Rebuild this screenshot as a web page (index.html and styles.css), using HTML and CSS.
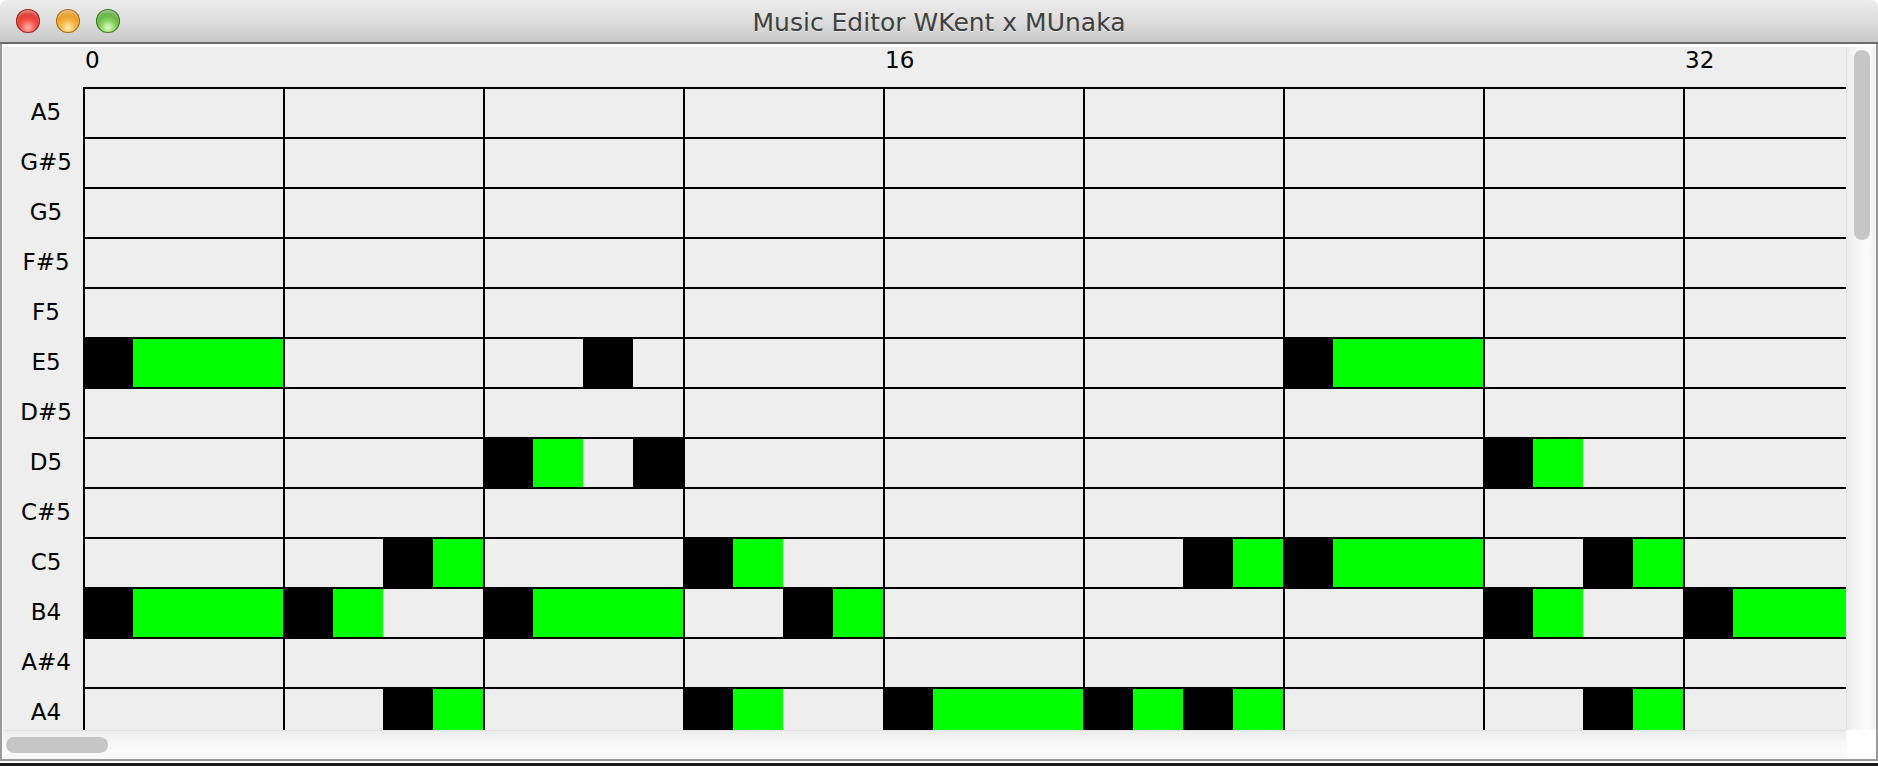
FILE: index.html
```html
<!DOCTYPE html>
<html>
<head>
<meta charset="utf-8">
<title>Music Editor WKent x MUnaka</title>
<link rel="stylesheet" href="styles.css">
</head>
<body>
<div class="window">
  <div class="titlebar">
    <div class="lights">
      <span class="light red"></span>
      <span class="light yellow"></span>
      <span class="light green"></span>
    </div>
    <div class="title">Music Editor WKent x MUnaka</div>
  </div>
  <div class="frame">
    <div class="main">
      <div class="viewport">
        <div class="content">
          <div class="ruler">
            <span class="beatnum">0</span>
            <span class="beatnum">16</span>
            <span class="beatnum">32</span>
          </div>
          <div class="score">
            <div class="labels">
              <div class="label">A5</div>
              <div class="label">G#5</div>
              <div class="label">G5</div>
              <div class="label">F#5</div>
              <div class="label">F5</div>
              <div class="label">E5</div>
              <div class="label">D#5</div>
              <div class="label">D5</div>
              <div class="label">C#5</div>
              <div class="label">C5</div>
              <div class="label">B4</div>
              <div class="label">A#4</div>
              <div class="label">A4</div>
            </div>
            <div class="grid">
              <!-- E5 -->
              <div class="note head" style="grid-row:6;grid-column:1"></div>
              <div class="note sustain" style="grid-row:6;grid-column:2 / span 3"></div>
              <div class="note head" style="grid-row:6;grid-column:11"></div>
              <div class="note head" style="grid-row:6;grid-column:25"></div>
              <div class="note sustain" style="grid-row:6;grid-column:26 / span 3"></div>
              <!-- D5 -->
              <div class="note head" style="grid-row:8;grid-column:9"></div>
              <div class="note sustain" style="grid-row:8;grid-column:10"></div>
              <div class="note head" style="grid-row:8;grid-column:12"></div>
              <div class="note head" style="grid-row:8;grid-column:29"></div>
              <div class="note sustain" style="grid-row:8;grid-column:30"></div>
              <!-- C5 -->
              <div class="note head" style="grid-row:10;grid-column:7"></div>
              <div class="note sustain" style="grid-row:10;grid-column:8"></div>
              <div class="note head" style="grid-row:10;grid-column:13"></div>
              <div class="note sustain" style="grid-row:10;grid-column:14"></div>
              <div class="note head" style="grid-row:10;grid-column:23"></div>
              <div class="note sustain" style="grid-row:10;grid-column:24"></div>
              <div class="note head" style="grid-row:10;grid-column:25"></div>
              <div class="note sustain" style="grid-row:10;grid-column:26 / span 3"></div>
              <div class="note head" style="grid-row:10;grid-column:31"></div>
              <div class="note sustain" style="grid-row:10;grid-column:32"></div>
              <!-- B4 -->
              <div class="note head" style="grid-row:11;grid-column:1"></div>
              <div class="note sustain" style="grid-row:11;grid-column:2 / span 3"></div>
              <div class="note head" style="grid-row:11;grid-column:5"></div>
              <div class="note sustain" style="grid-row:11;grid-column:6"></div>
              <div class="note head" style="grid-row:11;grid-column:9"></div>
              <div class="note sustain" style="grid-row:11;grid-column:10 / span 3"></div>
              <div class="note head" style="grid-row:11;grid-column:15"></div>
              <div class="note sustain" style="grid-row:11;grid-column:16"></div>
              <div class="note head" style="grid-row:11;grid-column:29"></div>
              <div class="note sustain" style="grid-row:11;grid-column:30"></div>
              <div class="note head" style="grid-row:11;grid-column:33"></div>
              <div class="note sustain" style="grid-row:11;grid-column:34 / span 3"></div>
              <!-- A4 -->
              <div class="note head" style="grid-row:13;grid-column:7"></div>
              <div class="note sustain" style="grid-row:13;grid-column:8"></div>
              <div class="note head" style="grid-row:13;grid-column:13"></div>
              <div class="note sustain" style="grid-row:13;grid-column:14"></div>
              <div class="note head" style="grid-row:13;grid-column:17"></div>
              <div class="note sustain" style="grid-row:13;grid-column:18 / span 3"></div>
              <div class="note head" style="grid-row:13;grid-column:21"></div>
              <div class="note sustain" style="grid-row:13;grid-column:22"></div>
              <div class="note head" style="grid-row:13;grid-column:23"></div>
              <div class="note sustain" style="grid-row:13;grid-column:24"></div>
              <div class="note head" style="grid-row:13;grid-column:31"></div>
              <div class="note sustain" style="grid-row:13;grid-column:32"></div>
            </div>
          </div>
        </div>
      </div>
      <div class="vscroll"><div class="vthumb"></div></div>
    </div>
    <div class="bottom">
      <div class="hscroll"><div class="hthumb"></div></div>
      <div class="corner"></div>
    </div>
  </div>
  <div class="footer"></div>
</div>
</body>
</html>
```

FILE: styles.css
```css
html, body {
  margin: 0;
  padding: 0;
  background: #ffffff;
}

.window {
  width: 1878px;
  height: 766px;
  display: flex;
  flex-direction: column;
  overflow: hidden;
  font-family: "DejaVu Sans", "Liberation Sans", sans-serif;
}

.titlebar {
  height: 42px;
  flex: none;
  display: flex;
  align-items: center;
  border-bottom: 2px solid #6c6c6c;
  border-radius: 7px 7px 0 0;
  background: linear-gradient(to bottom, #ededed 0%, #dcdcdc 50%, #c9c9c9 100%);
}

.lights {
  display: flex;
  gap: 16px;
  padding-left: 16px;
  width: 104px;
  flex: none;
}

.light {
  width: 24px;
  height: 24px;
  border-radius: 50%;
  box-sizing: border-box;
}

.light.red {
  background: radial-gradient(circle at 50% 78%, #ffb3a8 0%, #f4564d 35%, #d3241c 70%, #a8231d 100%);
  box-shadow: inset 0 0 0 1px #9b2b25, inset 0 5px 4px -2px rgba(255,255,255,0.6);
}

.light.yellow {
  background: radial-gradient(circle at 50% 78%, #fff0b0 0%, #f6b444 35%, #e28e10 70%, #b57416 100%);
  box-shadow: inset 0 0 0 1px #a2701f, inset 0 5px 4px -2px rgba(255,255,255,0.6);
}

.light.green {
  background: radial-gradient(circle at 50% 78%, #dcffc4 0%, #86d05c 35%, #4ea331 70%, #3c7f28 100%);
  box-shadow: inset 0 0 0 1px #3f7a2d, inset 0 5px 4px -2px rgba(255,255,255,0.6);
}

.title {
  flex: 1;
  text-align: center;
  padding-right: 120px;
  padding-top: 3px;
  font-size: 25px;
  color: #404040;
  text-shadow: 0 1px 0 rgba(255,255,255,0.5);
  white-space: nowrap;
}

.frame {
  flex: none;
  display: flex;
  flex-direction: column;
  border-left: 2px solid #9a9a9a;
  border-right: 2px solid #9a9a9a;
  border-bottom: 2px solid #9a9a9a;
  padding-top: 3px;
  padding-left: 1px;
  background: #ffffff;
}

.main {
  height: 683px;
  display: flex;
}

.viewport {
  flex: 1;
  overflow: hidden;
  background: #eeeeee;
}

.content {
  width: 3280px;
  display: flex;
  flex-direction: column;
}

.ruler {
  height: 40px;
  display: flex;
  padding-left: 82px;
}

.beatnum {
  width: 800px;
  flex: none;
  font-size: 23px;
  color: #000;
  line-height: 27px;
}

.score {
  display: flex;
}

.labels {
  width: 80px;
  flex: none;
  display: flex;
  flex-direction: column;
}

.label {
  height: 50px;
  display: flex;
  align-items: center;
  justify-content: center;
  padding-left: 6px;
  font-size: 23px;
  color: #000;
}

.grid {
  position: relative;
  display: grid;
  grid-template-columns: repeat(64, 50px);
  grid-template-rows: repeat(13, 50px);
  width: 3200px;
  background: #eeeeee;
}

.grid::after {
  content: "";
  position: absolute;
  inset: 0 0 -2px 0;
  pointer-events: none;
  background-image:
    linear-gradient(to right, #000 2px, transparent 2px),
    linear-gradient(to bottom, #000 2px, transparent 2px);
  background-size: 200px 100%, 100% 50px;
}

.note.head {
  background: #000000;
}

.note.sustain {
  background: #00ff00;
}

.vscroll {
  width: 30px;
  flex: none;
  box-sizing: border-box;
  border-left: 1px solid #e2e2e2;
  background: linear-gradient(to right, #ededed 0%, #f7f7f7 40%, #fbfbfb 70%, #f2f2f2 100%);
}

.vthumb {
  margin-top: 3px;
  margin-left: 7px;
  width: 16px;
  height: 190px;
  border-radius: 8px;
  background: #c6c6c6;
}

.bottom {
  height: 29px;
  display: flex;
}

.hscroll {
  flex: 1;
  box-sizing: border-box;
  border-top: 1px solid #e2e2e2;
  background: linear-gradient(to bottom, #ededed 0%, #f7f7f7 40%, #fbfbfb 70%, #f6f6f6 100%);
}

.hthumb {
  margin-top: 6px;
  margin-left: 3px;
  width: 102px;
  height: 16px;
  border-radius: 8px;
  background: #c6c6c6;
}

.corner {
  width: 30px;
  flex: none;
  background: #ffffff;
}

.footer {
  flex: none;
  height: 2px;
  background: #ffffff;
  border-bottom: 3px solid #1a1a1a;
}
```
